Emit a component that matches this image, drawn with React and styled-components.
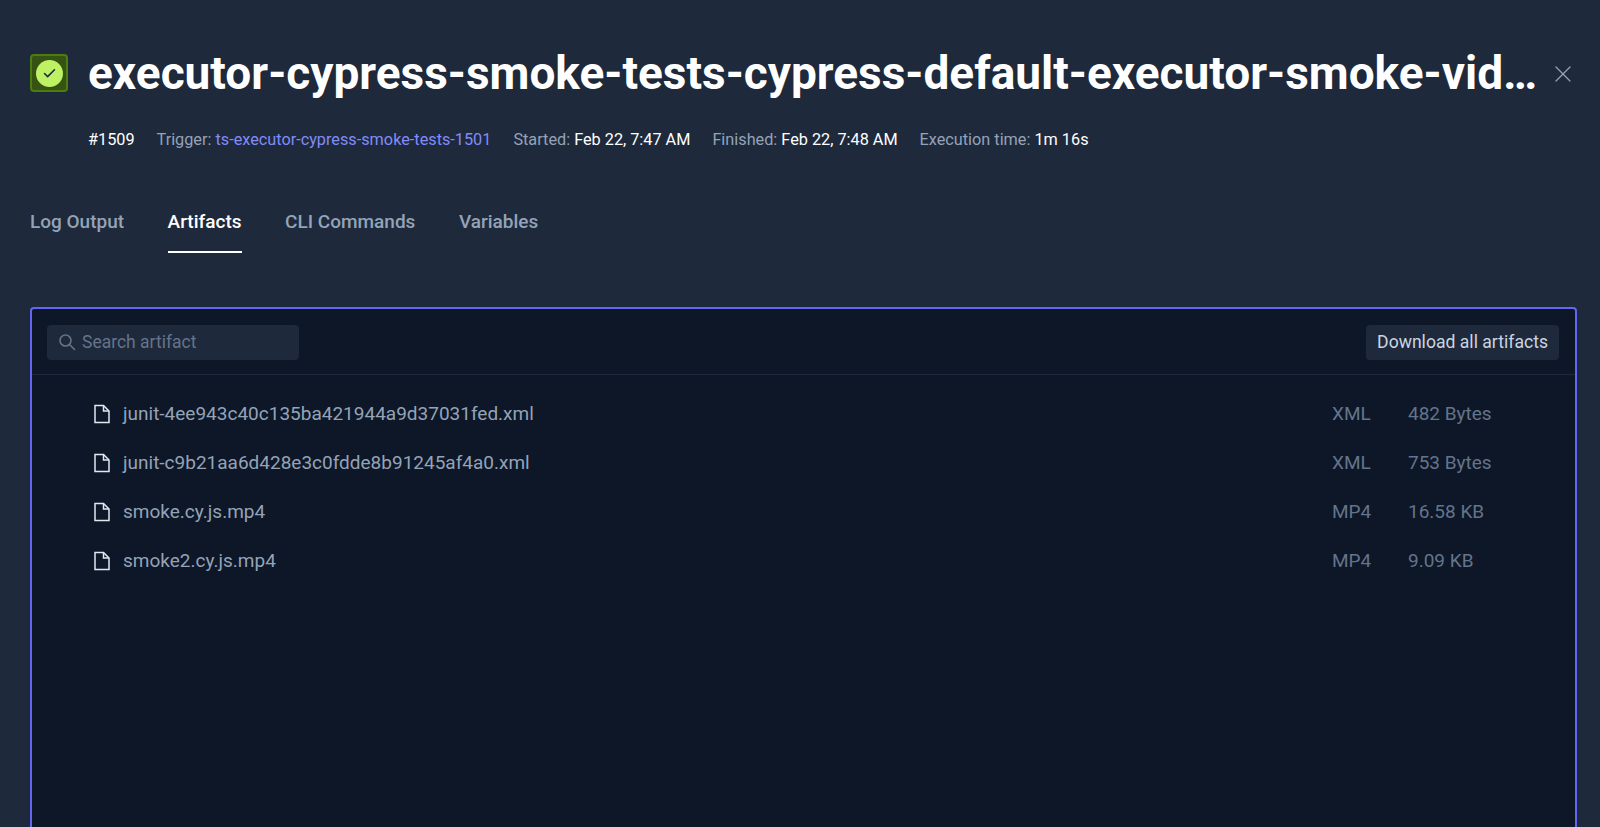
import React from 'react'
import styled, { createGlobalStyle } from 'styled-components'
import { X, Check } from 'lucide-react'

const GlobalStyle = createGlobalStyle`
  html, body {
    margin: 0;
    height: 100%;
    overflow: hidden;
    background: #1e293b;
    font-family: Roboto, "Liberation Sans", sans-serif;
  }
`

const artifacts = [
  { name: 'junit-4ee943c40c135ba421944a9d37031fed.xml', type: 'XML', size: '482 Bytes' },
  { name: 'junit-c9b21aa6d428e3c0fdde8b91245af4a0.xml', type: 'XML', size: '753 Bytes' },
  { name: 'smoke.cy.js.mp4', type: 'MP4', size: '16.58 KB' },
  { name: 'smoke2.cy.js.mp4', type: 'MP4', size: '9.09 KB' },
]

const FileIcon = () => (
  <svg width="18" height="20" viewBox="0 0 18 20" fill="none" stroke="#e2e8f0" strokeWidth="1.5">
    <path d="M2 1.5h8.5L16 7v11.5H2z" />
    <path d="M10.5 1.5V7H16" />
  </svg>
)

const SearchIcon = () => (
  <svg width="20" height="20" viewBox="0 0 20 20" fill="none" stroke="#64748b" strokeWidth="1.6" strokeLinecap="round">
    <circle cx="8.5" cy="8.5" r="5.5" />
    <path d="M12.5 12.5l5 5" />
  </svg>
)

const App = () => {
  return (
    <Page>
      <GlobalStyle />
      <Header>
        <StatusBox>
          <StatusDot>
            <Check size={15} strokeWidth={2.5} color="#1e293b" />
          </StatusDot>
        </StatusBox>
        <Title>executor-cypress-smoke-tests-cypress-default-executor-smoke-video-recording-1509</Title>
        <CloseButton>
          <X size={38} strokeWidth={1.1} />
        </CloseButton>
      </Header>

      <Meta>
        <MetaValue>#1509</MetaValue>
        <MetaItem>
          Trigger: <TriggerLink>ts-executor-cypress-smoke-tests-1501</TriggerLink>
        </MetaItem>
        <MetaItem>
          Started: <MetaValue>Feb 22, 7:47 AM</MetaValue>
        </MetaItem>
        <MetaItem>
          Finished: <MetaValue>Feb 22, 7:48 AM</MetaValue>
        </MetaItem>
        <MetaItem>
          Execution time: <MetaValue>1m 16s</MetaValue>
        </MetaItem>
      </Meta>

      <Tabs>
        <Tab>Log Output</Tab>
        <Tab $active>Artifacts</Tab>
        <Tab>CLI Commands</Tab>
        <Tab>Variables</Tab>
      </Tabs>

      <Panel>
        <Toolbar>
          <SearchBox>
            <SearchIcon />
            <SearchText>Search artifact</SearchText>
          </SearchBox>
          <DownloadButton>Download all artifacts</DownloadButton>
        </Toolbar>
        <List>
          {artifacts.map((item) => (
            <Row key={item.name}>
              <FileIcon />
              <FileName>{item.name}</FileName>
              <FileType>{item.type}</FileType>
              <FileSize>{item.size}</FileSize>
            </Row>
          ))}
        </List>
      </Panel>
    </Page>
  )
}

const Page = styled.div`
  height: 827px;
  box-sizing: border-box;
  padding: 54px 23px 0 30px;
  display: flex;
  flex-direction: column;
  overflow: hidden;
  background: #1e293b;
`

const Header = styled.div`
  display: flex;
  align-items: center;
  height: 38px;
`

const StatusBox = styled.div`
  width: 38px;
  height: 38px;
  box-sizing: border-box;
  flex-shrink: 0;
  display: flex;
  align-items: center;
  justify-content: center;
  background: #365314;
  border: 2px solid #4d7c0f;
  border-radius: 4px;
`

const StatusDot = styled.div`
  width: 27px;
  height: 27px;
  border-radius: 50%;
  display: flex;
  align-items: center;
  justify-content: center;
  background: #bef264;
`

const Title = styled.h1`
  margin: 0 0 0 20px;
  flex: 1;
  min-width: 0;
  font-size: 46px;
  line-height: 56px;
  font-weight: 700;
  color: #fff;
  white-space: nowrap;
  overflow: hidden;
  text-overflow: ellipsis;
`

const CloseButton = styled.div`
  width: 28px;
  margin: 2px 0 0 2px;
  flex-shrink: 0;
  display: flex;
  justify-content: center;
  color: #94a3b8;
`

const Meta = styled.div`
  display: flex;
  gap: 22px;
  margin: 38px 0 0 58px;
  font-size: 16.25px;
  line-height: 20px;
  color: #94a3b8;
`

const MetaItem = styled.span``

const MetaValue = styled.span`
  color: #fff;
`

const TriggerLink = styled.span`
  color: #818cf8;
`

const Tabs = styled.div`
  display: flex;
  gap: 43.5px;
  margin-top: 61px;
`

const Tab = styled.div`
  height: 42px;
  box-sizing: border-box;
  font-size: 19px;
  line-height: 21px;
  font-weight: 500;
  color: ${(p) => (p.$active ? '#fff' : '#94a3b8')};
  border-bottom: 2px solid ${(p) => (p.$active ? '#fff' : 'transparent')};
`

const Panel = styled.div`
  margin-top: 54px;
  flex: 1;
  display: flex;
  flex-direction: column;
  min-height: 600px;
  background: #0d1727;
  border: 2px solid #6366f1;
  border-radius: 4px;
`

const Toolbar = styled.div`
  display: flex;
  align-items: center;
  justify-content: space-between;
  height: 66px;
  box-sizing: border-box;
  padding: 1px 16px 0 15px;
  border-bottom: 1px solid #1e293b;
`

const SearchBox = styled.div`
  width: 252px;
  height: 35px;
  box-sizing: border-box;
  padding: 0 10px;
  display: flex;
  align-items: center;
  gap: 5px;
  background: #1e293b;
  border-radius: 4px;
`

const SearchText = styled.span`
  font-size: 17.5px;
  color: #64748b;
`

const DownloadButton = styled.div`
  height: 35px;
  padding: 0 11px;
  display: flex;
  align-items: center;
  background: #1e293b;
  border-radius: 4px;
  font-size: 17.6px;
  color: #cbd5e1;
`

const List = styled.div`
  display: flex;
  flex-direction: column;
  padding: 14px 0 0 61px;
`

const Row = styled.div`
  height: 49px;
  display: flex;
  align-items: center;
`

const FileName = styled.span`
  flex: 1;
  margin-left: 12px;
  font-size: 19px;
  color: #94a3b8;
`

const FileType = styled.span`
  width: 76px;
  font-size: 19px;
  color: #64748b;
`

const FileSize = styled.span`
  width: 167px;
  font-size: 19px;
  color: #64748b;
`

export default App
